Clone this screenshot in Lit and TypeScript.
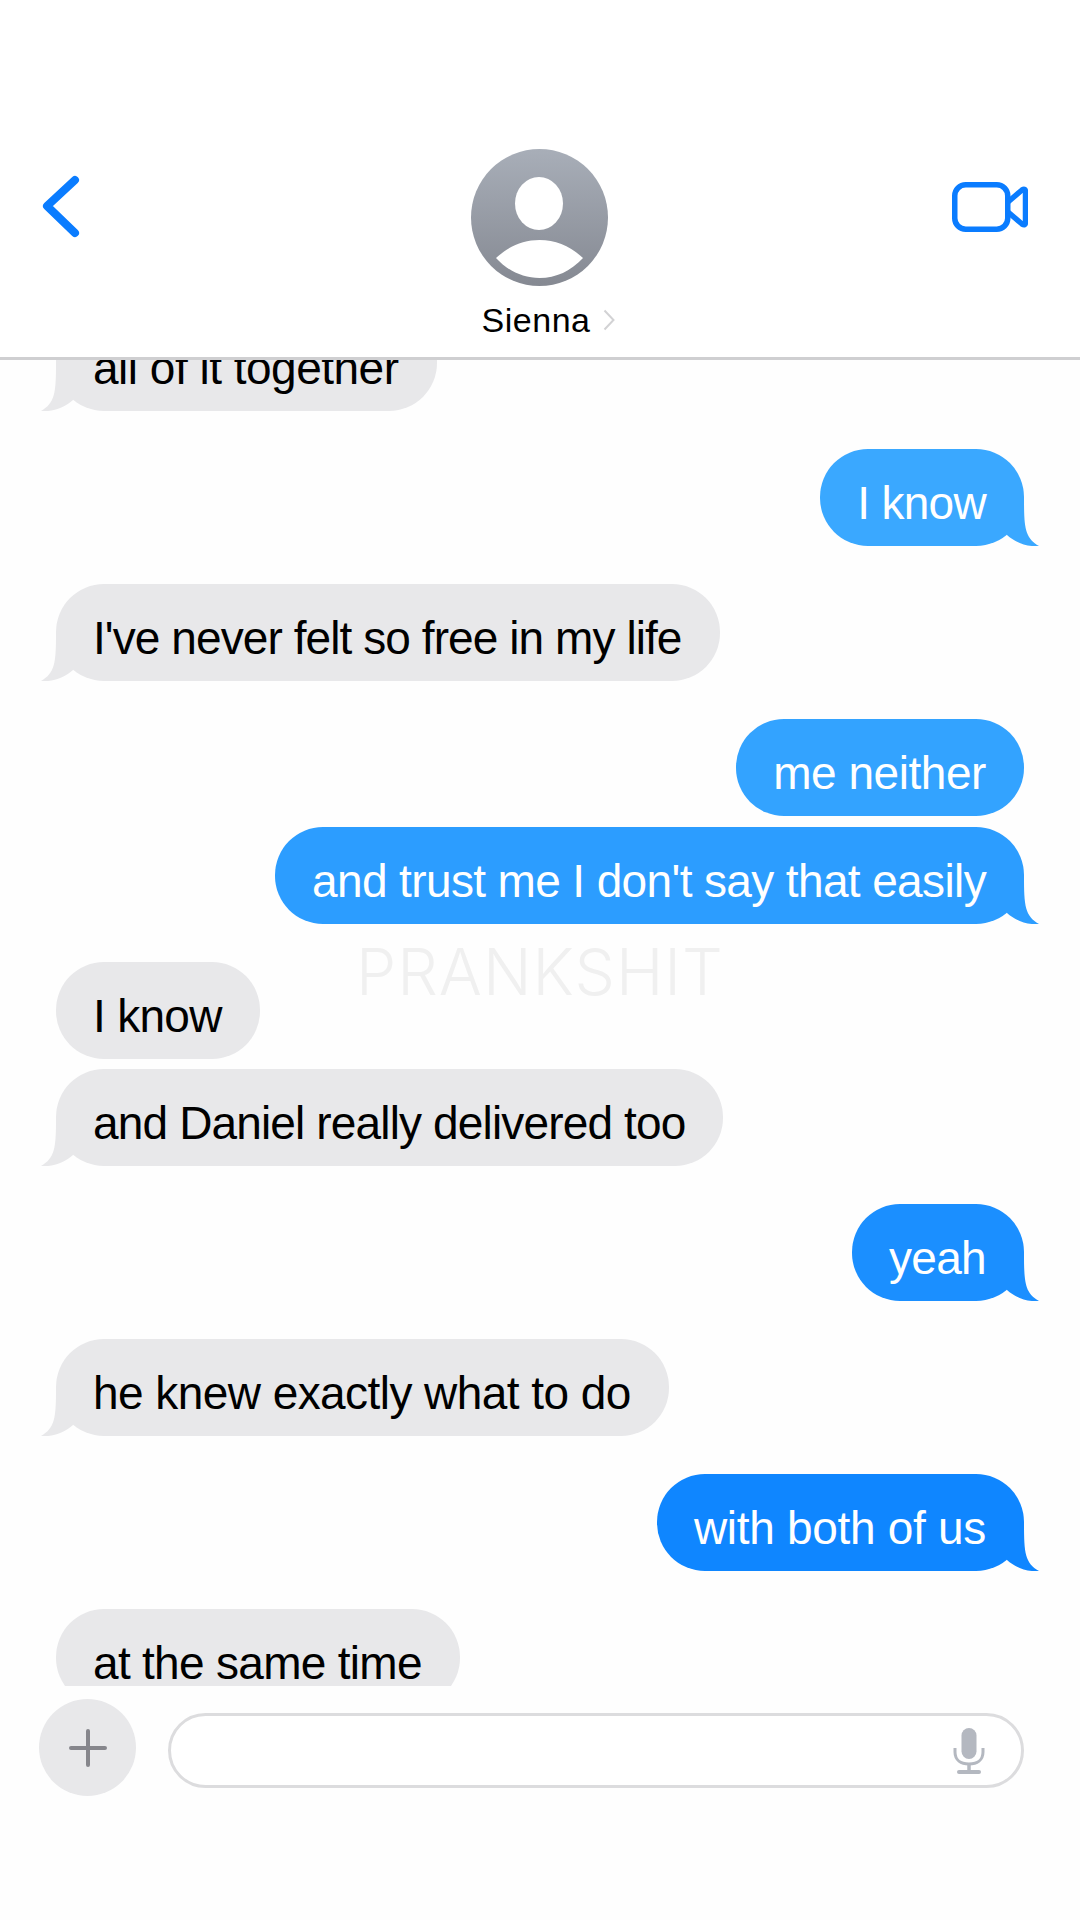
import { LitElement, html, css, svg } from "lit";
import { customElement } from "lit/decorators.js";

interface Msg { text: string; sent: boolean; tight?: boolean; tail?: boolean; color?: string; track: number; }

const MESSAGES: Msg[] = [
  { text: "all of it together", sent: false, tail: true, track: -0.5 },
  { text: "I know", sent: true, tail: true, color: "#3aa8ff", track: -0.7 },
  { text: "I've never felt so free in my life", sent: false, tail: true, track: -0.92 },
  { text: "me neither", sent: true, color: "#33a3ff", track: -0.45 },
  { text: "and trust me I don't say that easily", sent: true, tight: true, tail: true, color: "#2c9dff", track: -0.63 },
  { text: "I know", sent: false, track: -0.7 },
  { text: "and Daniel really delivered too", sent: false, tight: true, tail: true, track: -0.85 },
  { text: "yeah", sent: true, tail: true, color: "#1b8fff", track: -0.7 },
  { text: "he knew exactly what to do", sent: false, tail: true, track: -0.56 },
  { text: "with both of us", sent: true, tail: true, color: "#0f86ff", track: -0.3 },
  { text: "at the same time", sent: false, track: -0.7 },
];

@customElement("app-root")
export class AppRoot extends LitElement {
  static styles = css`
    :host {
      display: flex;
      flex-direction: column;
      width: 1080px;
      height: 1920px;
      position: relative;
      background: #fefefe;
      font-family: Inter, "Liberation Sans", sans-serif;
      overflow: hidden;
    }
    .header {
      height: 360px;
      box-sizing: border-box;
      flex: none;
      border-bottom: 3px solid #cfcfd1;
      display: grid;
      grid-template-columns: 1fr auto 1fr;
      padding: 149px 52px 0 52px;
      background: #fff;
    }
    .back { margin: 26px 0 0 -10px; display: block; }
    .video { justify-self: end; margin-top: 33px; display: block; }
    .contact { display: flex; flex-direction: column; align-items: center; }
    .avatar { display: block; }
    .name-row {
      display: flex;
      align-items: center;
      gap: 12px;
      margin-top: 14px;
      margin-left: 16px;
      height: 40px;
    }
    .name {
      font-family: "Liberation Sans", Arial, sans-serif;
      font-size: 34px;
      letter-spacing: 0.55px;
      color: #000;
      line-height: 40px;
    }
    .list {
      height: 1326px;
      flex: none;
      overflow: hidden;
      padding: 0 56px;
      box-sizing: border-box;
    }
    .stack {
      display: flex;
      flex-direction: column;
      margin-top: -84px;
    }
    .bubble {
      position: relative;
      box-sizing: border-box;
      height: 97px;
      border-radius: 48px;
      padding: 10px 38px 0 37px;
      display: flex;
      align-items: center;
      width: fit-content;
      font-family: "Liberation Sans", Arial, sans-serif;
      font-size: 46px;
      white-space: nowrap;
      margin-top: 38px;
    }
    .bubble.tight { margin-top: 11px; }
    .bubble.recv { background: #e8e8ea; color: #000; align-self: flex-start; }
    .bubble.recv.tight { margin-top: 10px; }
    .bubble.sent { color: #fff; align-self: flex-end; background: var(--c); }
    .tail {
      position: absolute;
      bottom: 0;
      width: 40px;
      height: 60px;
      display: block;
    }
    .sent .tail { right: -15px; fill: var(--c); }
    .recv .tail { left: -15px; fill: #e8e8ea; transform: scaleX(-1); }
    .composer {
      flex: none;
      display: flex;
      align-items: center;
      gap: 32px;
      padding: 13px 56px 0 39px;
    }
    .plus {
      width: 97px;
      height: 97px;
      border-radius: 50%;
      background: #e8e8ea;
      flex: none;
      display: flex;
      align-items: center;
      justify-content: center;
    }
    .input {
      flex: 1;
      height: 75px;
      margin-top: 6px;
      box-sizing: border-box;
      border: 3px solid #dcdcde;
      border-radius: 38px;
      background: #fff;
      display: flex;
      align-items: center;
      justify-content: flex-end;
      padding-right: 36px;
    }
    .watermark {
      position: absolute;
      left: 356px;
      top: 934px;
      font-size: 64px;
      font-weight: 300;
      line-height: 76px;
      letter-spacing: 1px;
      color: #f0f0f0;
      pointer-events: none;
    }
  `;

  private tail() {
    return html`<svg class="tail" viewBox="0 0 40 60">
      ${svg`<path d="M8 12 H25 C25 42 26 52 40 60 C28 61 17 57 8 49 Z"></path>`}
    </svg>`;
  }

  private bubble(m: Msg) {
    const cls = `bubble ${m.sent ? "sent" : "recv"} ${m.tight ? "tight" : ""}`;
    const style = `letter-spacing:${m.track}px;${m.sent ? `--c:${m.color}` : ""}`;
    return html`<div class=${cls} style=${style}>
      ${m.text}${m.tail ? this.tail() : null}
    </div>`;
  }

  render() {
    return html`
      <div class="header">
        <svg class="back" width="40" height="66" viewBox="0 0 40 66">
          <path d="M33 5 L5 31 L33 58" fill="none" stroke="#0a7cff" stroke-width="8" stroke-linecap="round" stroke-linejoin="round"></path>
        </svg>
        <div class="contact">
          <svg class="avatar" width="137" height="137" viewBox="0 0 137 137">
            <defs>
              <linearGradient id="ag" x1="0" y1="0" x2="0" y2="1">
                <stop offset="0" stop-color="#a8aeb8"></stop>
                <stop offset="1" stop-color="#858992"></stop>
              </linearGradient>
            </defs>
            <circle cx="68.5" cy="68.5" r="68.5" fill="url(#ag)"></circle>
            <ellipse cx="68" cy="54.5" rx="24" ry="26.5" fill="#fff"></ellipse>
            <path d="M25 109 C38 97 52 91 68.5 91 C85 91 99 97 112 109 C100 122 85 129 68.5 129 C52 129 37 122 25 109 Z" fill="#fff"></path>
          </svg>
          <div class="name-row">
            <span class="name">Sienna</span>
            <svg width="12" height="22" viewBox="0 0 12 22">
              <path d="M1.5 1.5 L10.5 11 L1.5 20.5" fill="none" stroke="#d2d2d4" stroke-width="2"></path>
            </svg>
          </div>
        </div>
        <svg class="video" width="76" height="50" viewBox="0 0 76 50">
          <rect x="2.75" y="2.75" width="53" height="44.5" rx="11" fill="none" stroke="#0a7cff" stroke-width="5.500"></rect>
          <path d="M56 20 L70 8 Q73.500 6 73.500 10 V40 Q73.500 44 70 42 L56 30" fill="none" stroke="#0a7cff" stroke-width="5.500" stroke-linejoin="round"></path>
        </svg>
      </div>
      <div class="list">
        <div class="stack">${MESSAGES.map((m) => this.bubble(m))}</div>
      </div>
      <div class="composer">
        <div class="plus">
          <svg width="38" height="38" viewBox="0 0 38 38">
            <path d="M19 2 V36 M2 19 H36" stroke="#86868c" stroke-width="4" stroke-linecap="round" fill="none"></path>
          </svg>
        </div>
        <div class="input">
          <svg width="32" height="46" viewBox="0 0 32 46">
            <rect x="8.500" y="0" width="15" height="31" rx="7.500" fill="#b4b8c0"></rect>
            <path d="M2 20 V24 C2 32 8 36 16 36 C24 36 30 32 30 24 V20" fill="none" stroke="#b4b8c0" stroke-width="3"></path>
            <path d="M16 36 V44" stroke="#b4b8c0" stroke-width="3.500"></path>
            <path d="M6 44 H26" stroke="#b4b8c0" stroke-width="4" stroke-linecap="round"></path>
          </svg>
        </div>
      </div>
      <div class="watermark">PRANKSHIT</div>
    `;
  }
}
